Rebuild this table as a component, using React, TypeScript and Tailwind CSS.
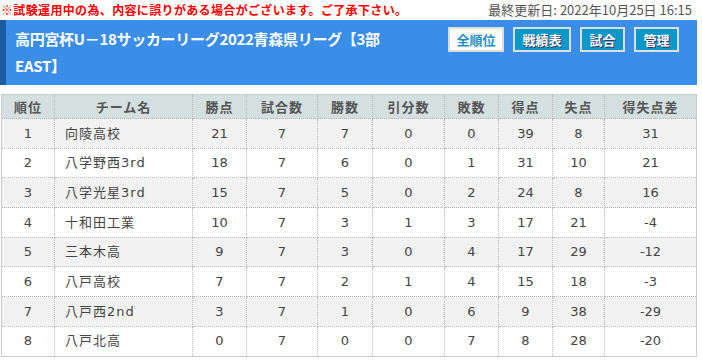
import React from 'react';

type Row = {
  rank: number;
  team: string;
  points: number;
  played: number;
  won: number;
  drawn: number;
  lost: number;
  gf: number;
  ga: number;
  diff: number;
};

const rows: Row[] = [
  { rank: 1, team: '向陵高校', points: 21, played: 7, won: 7, drawn: 0, lost: 0, gf: 39, ga: 8, diff: 31 },
  { rank: 2, team: '八学野西3rd', points: 18, played: 7, won: 6, drawn: 0, lost: 1, gf: 31, ga: 10, diff: 21 },
  { rank: 3, team: '八学光星3rd', points: 15, played: 7, won: 5, drawn: 0, lost: 2, gf: 24, ga: 8, diff: 16 },
  { rank: 4, team: '十和田工業', points: 10, played: 7, won: 3, drawn: 1, lost: 3, gf: 17, ga: 21, diff: -4 },
  { rank: 5, team: '三本木高', points: 9, played: 7, won: 3, drawn: 0, lost: 4, gf: 17, ga: 29, diff: -12 },
  { rank: 6, team: '八戸高校', points: 7, played: 7, won: 2, drawn: 1, lost: 4, gf: 15, ga: 18, diff: -3 },
  { rank: 7, team: '八戸西2nd', points: 3, played: 7, won: 1, drawn: 0, lost: 6, gf: 9, ga: 38, diff: -29 },
  { rank: 8, team: '八戸北高', points: 0, played: 7, won: 0, drawn: 0, lost: 7, gf: 8, ga: 28, diff: -20 },
];

const columns = [
  { label: '順位', width: 'w-[53px]' },
  { label: 'チーム名', width: 'w-[138px]' },
  { label: '勝点', width: 'w-[54px]' },
  { label: '試合数', width: 'w-[71px]' },
  { label: '勝数', width: 'w-[55px]' },
  { label: '引分数', width: 'w-[72px]' },
  { label: '敗数', width: 'w-[54px]' },
  { label: '得点', width: 'w-[54px]' },
  { label: '失点', width: 'w-[52px]' },
  { label: '得失点差', width: 'w-[92px]' },
];

const cell = 'border border-dotted border-[#bbb] text-center';
const jp = "font-['Noto_Sans_CJK_JP',sans-serif]";
const navBtn = `h-[25px] border-2 border-[#ddd] bg-[#0a97c9] text-[13px] font-bold text-white [text-shadow:1px_1px_0_#335] ${jp}`;

const App: React.FC = () => {
  return (
    <div className="w-[702px] h-[361px] overflow-hidden bg-white font-['DejaVu_Sans','Noto_Sans_CJK_JP',sans-serif]">
      <div className="flex h-[20px] items-center justify-between pl-[1px] pr-[10px]">
        <p className={`text-[12px] font-bold tracking-[0.35px] text-[#f00] ${jp}`}>
          ※試験運用中の為、内容に誤りがある場合がございます。ご了承下さい。
        </p>
        <p className={`text-[13px] text-[#555] ${jp}`}>
          最終更新日: 2022年10月25日 16:15
        </p>
      </div>

      <div className="flex w-[697px] h-[65px] justify-between border-l-[6px] border-[#1b5c9e] bg-[#3a8ee8] pl-[9px] pr-[18px]">
        <h1 className={`w-[380px] pt-[5px] text-[15px] leading-[27px] font-bold text-white tracking-[-0.3px] ${jp}`}>
          高円宮杯U－18サッカーリーグ2022青森県リーグ【3部 EAST】
        </h1>
        <div className="flex gap-[9px] pt-[7px]">
          <button className={`h-[25px] w-[56px] border-2 border-[#ddd] bg-white text-[13px] font-bold text-[#1e8fc4] ${jp}`}>
            全順位
          </button>
          <button className={`${navBtn} w-[58px]`}>戦績表</button>
          <button className={`${navBtn} w-[45px]`}>試合</button>
          <button className={`${navBtn} w-[45px]`}>管理</button>
        </div>
      </div>

      <div className="pt-[9px] pl-[1px]">
        <table className="w-[696px] table-fixed border-collapse border border-solid border-[#ccc] text-[13px] text-[#444]">
          <thead>
            <tr className="h-[24px] bg-[#d4dfdf]">
              {columns.map((c) => (
                <th key={c.label} className={`${cell} ${c.width} font-bold text-[#555] tracking-[1px] ${jp}`}>
                  {c.label}
                </th>
              ))}
            </tr>
          </thead>
          <tbody>
            {rows.map((r, i) => (
              <tr key={r.rank} className={`h-[29.7px] ${i % 2 === 0 ? 'bg-[#f2f2f2]' : 'bg-white'}`}>
                <td className={cell}>{r.rank}</td>
                <td className="border border-dotted border-[#bbb] pl-[10px] text-left tracking-[1px]">{r.team}</td>
                <td className={cell}>{r.points}</td>
                <td className={cell}>{r.played}</td>
                <td className={cell}>{r.won}</td>
                <td className={cell}>{r.drawn}</td>
                <td className={cell}>{r.lost}</td>
                <td className={cell}>{r.gf}</td>
                <td className={cell}>{r.ga}</td>
                <td className={cell}>{r.diff}</td>
              </tr>
            ))}
          </tbody>
        </table>
      </div>
    </div>
  );
};

export default App;
